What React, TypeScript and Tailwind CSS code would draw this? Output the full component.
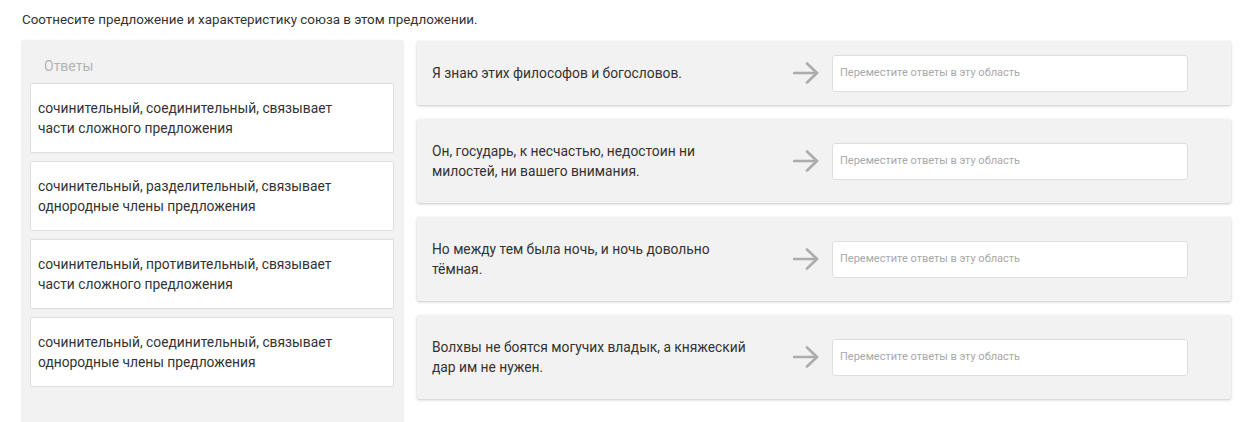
import React from "react";

const answerLines = [
  ["сочинительный, соединительный, связывает", "части сложного предложения"],
  ["сочинительный, разделительный, связывает", "однородные члены предложения"],
  ["сочинительный, противительный, связывает", "части сложного предложения"],
  ["сочинительный, соединительный, связывает", "однородные члены предложения"],
];

const sentences = [
  "Я знаю этих философов и богословов.",
  "Он, государь, к несчастью, недостоин ни милостей, ни вашего внимания.",
  "Но между тем была ночь, и ночь довольно тёмная.",
  "Волхвы не боятся могучих владык, а княжеский дар им не нужен.",
];

function Arrow() {
  return (
    <svg width="26" height="22" viewBox="0 0 26 22" fill="none" className="shrink-0">
      <path d="M1 11 H24" stroke="#acacac" strokeWidth="2.6" strokeLinecap="round" />
      <path d="M14 1.5 L24 11 L14 20.5" stroke="#acacac" strokeWidth="2.6" strokeLinecap="round" strokeLinejoin="round" />
    </svg>
  );
}

export default function App() {
  return (
    <div
      className="w-[1256px] h-[422px] overflow-hidden bg-white text-[#333333]"
      style={{ fontFamily: "Roboto, 'Noto Sans', sans-serif" }}
    >
      <div className="pl-[22px] pt-[11px]">
        <p className="text-[13.4px] leading-[18px] text-[#333333]">
          Соотнесите предложение и характеристику союза в этом предложении.
        </p>
        <div className="mt-[12px] flex gap-[14px] items-start">
          <div className="w-[381px] h-[420px] bg-[#f2f2f2] shadow-[0_0_2px_rgba(0,0,0,0.18)] pt-[16px] px-[8px] shrink-0">
            <div className="pl-[14px] text-[14px] leading-[18px] text-[#b4b4b4]">Ответы</div>
            <div className="mt-[8px] flex flex-col gap-[8px] w-[364px]">
              {answerLines.map((lines, i) => (
                <div
                  key={i}
                  className="bg-white border border-[#dedede] rounded-[2px] px-[7px] py-[14px] text-[13.8px] leading-[20px] text-[#333333]"
                >
                  {lines.map((l, j) => (
                    <div key={j}>{l}</div>
                  ))}
                </div>
              ))}
            </div>
          </div>
          <div className="flex flex-col gap-[14px] w-[814px]">
            {sentences.map((s, i) => (
              <div
                key={i}
                className="bg-[#f2f2f2] shadow-[0_1px_3px_rgba(0,0,0,0.22)] rounded-[2px] flex items-center pl-[15px] py-[10px]"
              >
                <div className="w-[325px] py-[12px] text-[13.8px] leading-[20px] text-[#333333] shrink-0">
                  {s}
                </div>
                <div className="ml-[36px]">
                  <Arrow />
                </div>
                <div className="ml-[13px] w-[356px] h-[37px] bg-white border border-[#dedede] rounded-[3px] flex items-center pl-[7px] text-[11px] text-[#a8a8a8]">
                  Переместите ответы в эту область
                </div>
              </div>
            ))}
          </div>
        </div>
      </div>
    </div>
  );
}
